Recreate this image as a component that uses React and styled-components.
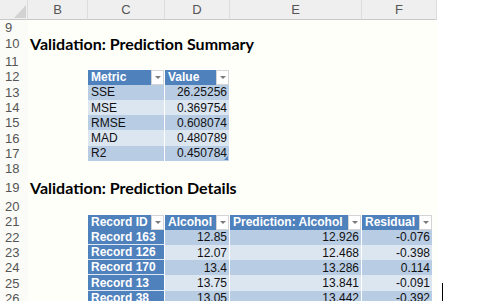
import React from "react";
import styled, { createGlobalStyle } from "styled-components";

const GlobalStyle = createGlobalStyle`
  html, body { margin: 0; padding: 0; background: #fff; overflow: hidden; }
  body { font-family: "Liberation Sans", Arial, sans-serif; }
`;

// A (row numbers), B, C, D, E, F, F tail, outside
const COLS = "28px 60px 77px 65px 132px 71px 4px 1fr";

const Sheet = styled.div`
  position: relative;
  width: 477px;
  height: 301px;
  overflow: hidden;
  background: #fff;
`;

const HeaderBar = styled.div`
  display: grid;
  grid-template-columns: ${COLS};
  height: 20px;
`;

const Corner = styled.div`
  background: #efefef;
  border-bottom: 1px solid #c8c8c8;
  border-right: 1px solid #dcdcdc;
  display: flex;
  align-items: flex-end;
  justify-content: flex-end;
  padding: 0 1px 1px 0;
`;

const ColLetter = styled.div`
  grid-column: ${(p) => p.$span || "auto"};
  background: #efefef;
  border-bottom: 1px solid #c8c8c8;
  border-right: 1px solid #dcdcdc;
  display: flex;
  align-items: center;
  justify-content: center;
  font-size: 13px;
  color: #555;
`;

const Row = styled.div`
  display: grid;
  grid-template-columns: ${COLS};
  height: ${(p) => p.$h}px;
  background: #fffffa;
  overflow: hidden;
`;

const RowNum = styled.div`
  display: flex;
  align-items: ${(p) => (p.$clip ? "flex-end" : "center")};
  padding-left: 5px;
  font-size: 13px;
  line-height: 15px;
  color: #555;
  background: #fbfbf7;
`;

const Gutter = styled.div`
  grid-column: 8;
  background: #fff;
`;

const Title = styled.div`
  grid-column: 2 / 8;
  display: flex;
  align-items: center;
  padding-left: 2px;
  font-family: Lato, "Open Sans", sans-serif;
  font-weight: 700;
  font-size: 16px;
  color: #000;
  white-space: nowrap;
`;

const Cell = styled.div`
  grid-column: ${(p) => p.$col};
  position: relative;
  display: flex;
  align-items: center;
  justify-content: ${(p) => (p.$right ? "flex-end" : "flex-start")};
  padding: 0 2px 0 3px;
  background: ${(p) => p.$bg};
  color: ${(p) => p.$color || "#111"};
  font-weight: ${(p) => (p.$bold ? 700 : 400)};
  font-size: 12px;
  border-right: 1px solid #fff;
  border-bottom: ${(p) => (p.$lined ? "1px solid #dfe7f2" : "none")};
  box-sizing: border-box;
  white-space: nowrap;
  overflow: hidden;
`;

const HeadCell = styled(Cell)`
  padding-right: 0;
  background: #4f81bd;
  color: #fff;
  font-weight: 700;
  border-top: 1px solid #fff;
`;

const HeadLabel = styled.span`
  flex: 1;
`;

const DropBtn = styled.span`
  width: 13px;
  align-self: stretch;
  background: #fff;
  border: 1px solid #d4d4d4;
  box-sizing: border-box;
  display: flex;
  align-items: center;
  justify-content: center;
  &::after {
    content: "";
    border-left: 3px solid transparent;
    border-right: 3px solid transparent;
    border-top: 3px solid #7a7a7a;
  }
`;

const ResizeMark = styled.span`
  position: absolute;
  right: 1px;
  bottom: 1px;
  width: 0;
  height: 0;
  border-left: 4px solid transparent;
  border-bottom: 4px solid #4f81bd;
`;

const Cursor = styled.div`
  position: absolute;
  left: 442px;
  top: 283px;
  width: 1px;
  height: 18px;
  background: #000;
`;

const DARK = "#b8cce4";
const LIGHT = "#dce6f1";
const H = 15.3;

const summary = [
  ["SSE", "26.25256"],
  ["MSE", "0.369754"],
  ["RMSE", "0.608074"],
  ["MAD", "0.480789"],
  ["R2", "0.450784"],
];

const details = [
  ["Record 163", "12.85", "12.926", "-0.076"],
  ["Record 126", "12.07", "12.468", "-0.398"],
  ["Record 170", "13.4", "13.286", "0.114"],
  ["Record 13", "13.75", "13.841", "-0.091"],
  ["Record 38", "13.05", "13.442", "-0.392"],
];

function Head({ col, children }) {
  return (
    <HeadCell $col={col}>
      <HeadLabel>{children}</HeadLabel>
      <DropBtn />
    </HeadCell>
  );
}

function SheetRow({ n, h = H, clip, children }) {
  return (
    <Row $h={h}>
      <RowNum $clip={clip}>{n}</RowNum>
      {children}
      <Gutter />
    </Row>
  );
}

export default function App() {
  return (
    <>
      <GlobalStyle />
      <Sheet>
        <HeaderBar>
          <Corner>
            <svg width="12" height="13" viewBox="0 0 12 13">
              <polygon points="12,0 12,13 0,13" fill="#d2d2d2" />
            </svg>
          </Corner>
          <ColLetter>B</ColLetter>
          <ColLetter>C</ColLetter>
          <ColLetter>D</ColLetter>
          <ColLetter>E</ColLetter>
          <ColLetter $span="6 / 8">F</ColLetter>
          <Gutter />
        </HeaderBar>

        <SheetRow n={9} h={12} clip />
        <SheetRow n={10} h={22}>
          <Title>Validation: Prediction Summary</Title>
        </SheetRow>
        <SheetRow n={11} />
        <SheetRow n={12}>
          <Head col={3}>Metric</Head>
          <Head col={4}>Value</Head>
        </SheetRow>
        {summary.map(([m, v], i) => (
          <SheetRow key={m} n={13 + i}>
            <Cell $col={3} $bg={i % 2 ? LIGHT : DARK}>{m}</Cell>
            <Cell $col={4} $bg={i % 2 ? LIGHT : DARK} $right>
              {v}
              {i === summary.length - 1 && <ResizeMark />}
            </Cell>
          </SheetRow>
        ))}
        <SheetRow n={18} />
        <SheetRow n={19} h={22.6}>
          <Title>Validation: Prediction Details</Title>
        </SheetRow>
        <SheetRow n={20} />
        <SheetRow n={21}>
          <Head col={3}>Record ID</Head>
          <Head col={4}>Alcohol</Head>
          <Head col={5}>Prediction: Alcohol</Head>
          <Head col={6}>Residual</Head>
        </SheetRow>
        {details.map(([id, a, p, r], i) => {
          const bg = i % 2 ? LIGHT : DARK;
          return (
            <SheetRow key={id} n={22 + i}>
              <Cell $col={3} $bg="#4f81bd" $color="#fff" $bold $lined>{id}</Cell>
              <Cell $col={4} $bg={bg} $right>{a}</Cell>
              <Cell $col={5} $bg={bg} $right>{p}</Cell>
              <Cell $col={6} $bg={bg} $right>{r}</Cell>
            </SheetRow>
          );
        })}
        <Cursor />
      </Sheet>
    </>
  );
}
